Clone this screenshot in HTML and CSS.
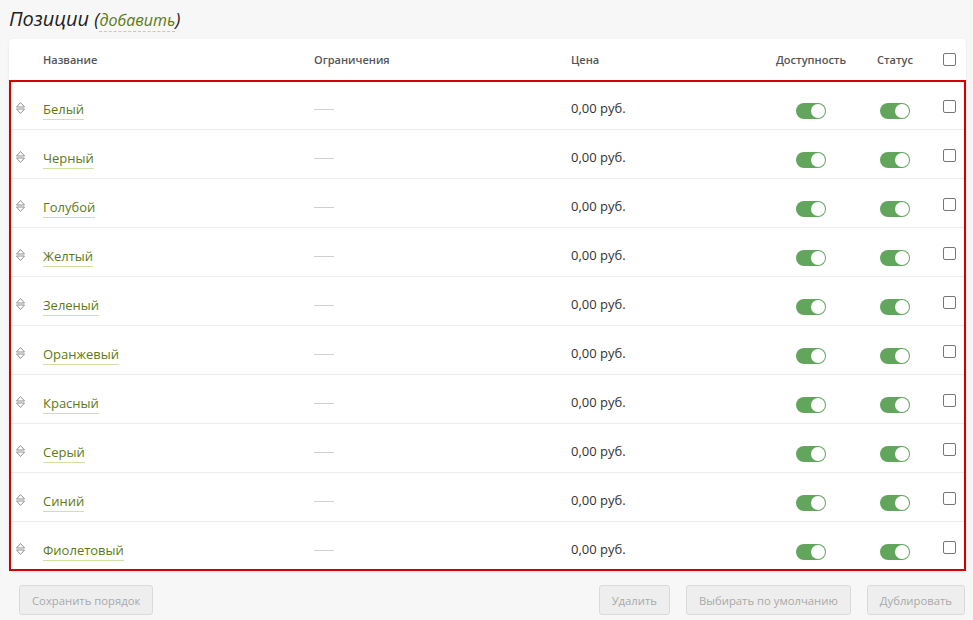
FILE: index.html
```html
<!DOCTYPE html>
<html lang="ru">
<head>
<meta charset="utf-8">
<title>Позиции</title>
<link rel="stylesheet" href="styles.css">
</head>
<body>
<h1 class="title">Позиции <span class="paren">(<a class="add">добавить</a>)</span></h1>
<div class="card">
  <div class="row head">
    <div></div>
    <div class="h">Название</div>
    <div class="h">Ограничения</div>
    <div class="h">Цена</div>
    <div class="h c">Доступность</div>
    <div class="h c">Статус</div>
    <div class="chk-cell"><span class="chk"></span></div>
  </div>
  <div class="body">
    <div class="row item"><div class="drag"><svg width="11" height="14" viewBox="0 0 11 14"><path d="M1.5 6 L5.5 1.5 L9.5 6 Z M1.5 8 L9.5 8 L5.5 12.5 Z" fill="none" stroke="#8f8f8f" stroke-width="1"/></svg></div><div><a class="name">Белый</a></div><div><span class="dash"></span></div><div class="price">0,00 руб.</div><div class="c"><span class="tog"><span class="knob"></span></span></div><div class="c"><span class="tog"><span class="knob"></span></span></div><div class="chk-cell"><span class="chk"></span></div></div>
    <div class="row item"><div class="drag"><svg width="11" height="14" viewBox="0 0 11 14"><path d="M1.5 6 L5.5 1.5 L9.5 6 Z M1.5 8 L9.5 8 L5.5 12.5 Z" fill="none" stroke="#8f8f8f" stroke-width="1"/></svg></div><div><a class="name">Черный</a></div><div><span class="dash"></span></div><div class="price">0,00 руб.</div><div class="c"><span class="tog"><span class="knob"></span></span></div><div class="c"><span class="tog"><span class="knob"></span></span></div><div class="chk-cell"><span class="chk"></span></div></div>
    <div class="row item"><div class="drag"><svg width="11" height="14" viewBox="0 0 11 14"><path d="M1.5 6 L5.5 1.5 L9.5 6 Z M1.5 8 L9.5 8 L5.5 12.5 Z" fill="none" stroke="#8f8f8f" stroke-width="1"/></svg></div><div><a class="name">Голубой</a></div><div><span class="dash"></span></div><div class="price">0,00 руб.</div><div class="c"><span class="tog"><span class="knob"></span></span></div><div class="c"><span class="tog"><span class="knob"></span></span></div><div class="chk-cell"><span class="chk"></span></div></div>
    <div class="row item"><div class="drag"><svg width="11" height="14" viewBox="0 0 11 14"><path d="M1.5 6 L5.5 1.5 L9.5 6 Z M1.5 8 L9.5 8 L5.5 12.5 Z" fill="none" stroke="#8f8f8f" stroke-width="1"/></svg></div><div><a class="name">Желтый</a></div><div><span class="dash"></span></div><div class="price">0,00 руб.</div><div class="c"><span class="tog"><span class="knob"></span></span></div><div class="c"><span class="tog"><span class="knob"></span></span></div><div class="chk-cell"><span class="chk"></span></div></div>
    <div class="row item"><div class="drag"><svg width="11" height="14" viewBox="0 0 11 14"><path d="M1.5 6 L5.5 1.5 L9.5 6 Z M1.5 8 L9.5 8 L5.5 12.5 Z" fill="none" stroke="#8f8f8f" stroke-width="1"/></svg></div><div><a class="name">Зеленый</a></div><div><span class="dash"></span></div><div class="price">0,00 руб.</div><div class="c"><span class="tog"><span class="knob"></span></span></div><div class="c"><span class="tog"><span class="knob"></span></span></div><div class="chk-cell"><span class="chk"></span></div></div>
    <div class="row item"><div class="drag"><svg width="11" height="14" viewBox="0 0 11 14"><path d="M1.5 6 L5.5 1.5 L9.5 6 Z M1.5 8 L9.5 8 L5.5 12.5 Z" fill="none" stroke="#8f8f8f" stroke-width="1"/></svg></div><div><a class="name">Оранжевый</a></div><div><span class="dash"></span></div><div class="price">0,00 руб.</div><div class="c"><span class="tog"><span class="knob"></span></span></div><div class="c"><span class="tog"><span class="knob"></span></span></div><div class="chk-cell"><span class="chk"></span></div></div>
    <div class="row item"><div class="drag"><svg width="11" height="14" viewBox="0 0 11 14"><path d="M1.5 6 L5.5 1.5 L9.5 6 Z M1.5 8 L9.5 8 L5.5 12.5 Z" fill="none" stroke="#8f8f8f" stroke-width="1"/></svg></div><div><a class="name">Красный</a></div><div><span class="dash"></span></div><div class="price">0,00 руб.</div><div class="c"><span class="tog"><span class="knob"></span></span></div><div class="c"><span class="tog"><span class="knob"></span></span></div><div class="chk-cell"><span class="chk"></span></div></div>
    <div class="row item"><div class="drag"><svg width="11" height="14" viewBox="0 0 11 14"><path d="M1.5 6 L5.5 1.5 L9.5 6 Z M1.5 8 L9.5 8 L5.5 12.5 Z" fill="none" stroke="#8f8f8f" stroke-width="1"/></svg></div><div><a class="name">Серый</a></div><div><span class="dash"></span></div><div class="price">0,00 руб.</div><div class="c"><span class="tog"><span class="knob"></span></span></div><div class="c"><span class="tog"><span class="knob"></span></span></div><div class="chk-cell"><span class="chk"></span></div></div>
    <div class="row item"><div class="drag"><svg width="11" height="14" viewBox="0 0 11 14"><path d="M1.5 6 L5.5 1.5 L9.5 6 Z M1.5 8 L9.5 8 L5.5 12.5 Z" fill="none" stroke="#8f8f8f" stroke-width="1"/></svg></div><div><a class="name">Синий</a></div><div><span class="dash"></span></div><div class="price">0,00 руб.</div><div class="c"><span class="tog"><span class="knob"></span></span></div><div class="c"><span class="tog"><span class="knob"></span></span></div><div class="chk-cell"><span class="chk"></span></div></div>
    <div class="row item"><div class="drag"><svg width="11" height="14" viewBox="0 0 11 14"><path d="M1.5 6 L5.5 1.5 L9.5 6 Z M1.5 8 L9.5 8 L5.5 12.5 Z" fill="none" stroke="#8f8f8f" stroke-width="1"/></svg></div><div><a class="name">Фиолетовый</a></div><div><span class="dash"></span></div><div class="price">0,00 руб.</div><div class="c"><span class="tog"><span class="knob"></span></span></div><div class="c"><span class="tog"><span class="knob"></span></span></div><div class="chk-cell"><span class="chk"></span></div></div>
  </div>
</div>
<div class="actions">
  <button class="btn">Сохранить порядок</button>
  <div class="spacer"></div>
  <button class="btn">Удалить</button>
  <button class="btn">Выбирать по умолчанию</button>
  <button class="btn">Дублировать</button>
</div>
</body>
</html>
```
FILE: styles.css
```css
html, body {
  margin: 0;
  background: #f7f7f7;
}
body {
  padding: 0 7px 0 9px;
  font-family: "Open Sans", "Liberation Sans", sans-serif;
  color: #333;
}
.title {
  margin: 0;
  height: 39px;
  font-size: 20px;
  font-weight: 400;
  font-style: italic;
  line-height: 38px;
  color: #222;
}
.paren { font-size: 18px; }
.add {
  color: #5d7a17;
  font-size: 16px;
  border-bottom: 1px dashed #c9c9b8;
}
.card {
  background: #fff;
  border-radius: 4px;
  box-shadow: 0 1px 3px rgba(0,0,0,0.08);
}
.row {
  display: grid;
  grid-template-columns: 34px 271px 257px 1fr 90px 78px 32px;
  align-items: center;
}
.head {
  height: 41px;
}
.h {
  font-size: 11px;
  font-weight: 600;
  color: #555;
}
.c { text-align: center; }
.body {
  padding-top: 1px;
  outline: 2px solid #d40000;
  outline-offset: -2px;
}
.item {
  height: 49px;
  box-sizing: border-box;
  padding-top: 6px;
  border-bottom: 1px solid #ececec;
}
.item:last-child { border-bottom-color: transparent; }
.drag {
  padding-left: 6px;
  display: flex;
  align-items: center;
  height: 14px;
}
.name {
  font-size: 13px;
  color: #5d7a17;
  padding-bottom: 1px;
  border-bottom: 1px solid #cfe2a5;
}
.dash {
  display: inline-block;
  width: 20px;
  height: 1px;
  background: #d0d0d0;
  vertical-align: middle;
}
.price {
  font-size: 13px;
  color: #333;
}
.tog {
  display: inline-block;
  position: relative;
  width: 30px;
  height: 16px;
  border-radius: 8px;
  background: #62a65d;
  margin-top: 6px;
  vertical-align: top;
}
.knob {
  position: absolute;
  right: 1px;
  top: 1px;
  width: 14px;
  height: 14px;
  border-radius: 50%;
  background: #fff;
}
.chk-cell {
  padding-left: 9px;
  display: flex;
}
.chk {
  display: inline-block;
  width: 11px;
  height: 11px;
  border: 1px solid #767676;
  border-radius: 2px;
  background: #fff;
}
.item .chk { margin-bottom: 3px; }
.actions {
  display: flex;
  gap: 16px;
  padding: 14px 1px 0 10px;
}
.spacer { flex: 1; }
.btn {
  height: 30px;
  padding: 0 12px;
  font-family: "Open Sans", "Liberation Sans", sans-serif;
  font-size: 11.3px;
  color: #a9a9a9;
  background: #eee;
  border: 1px solid #dadada;
  border-radius: 3px;
}
```
